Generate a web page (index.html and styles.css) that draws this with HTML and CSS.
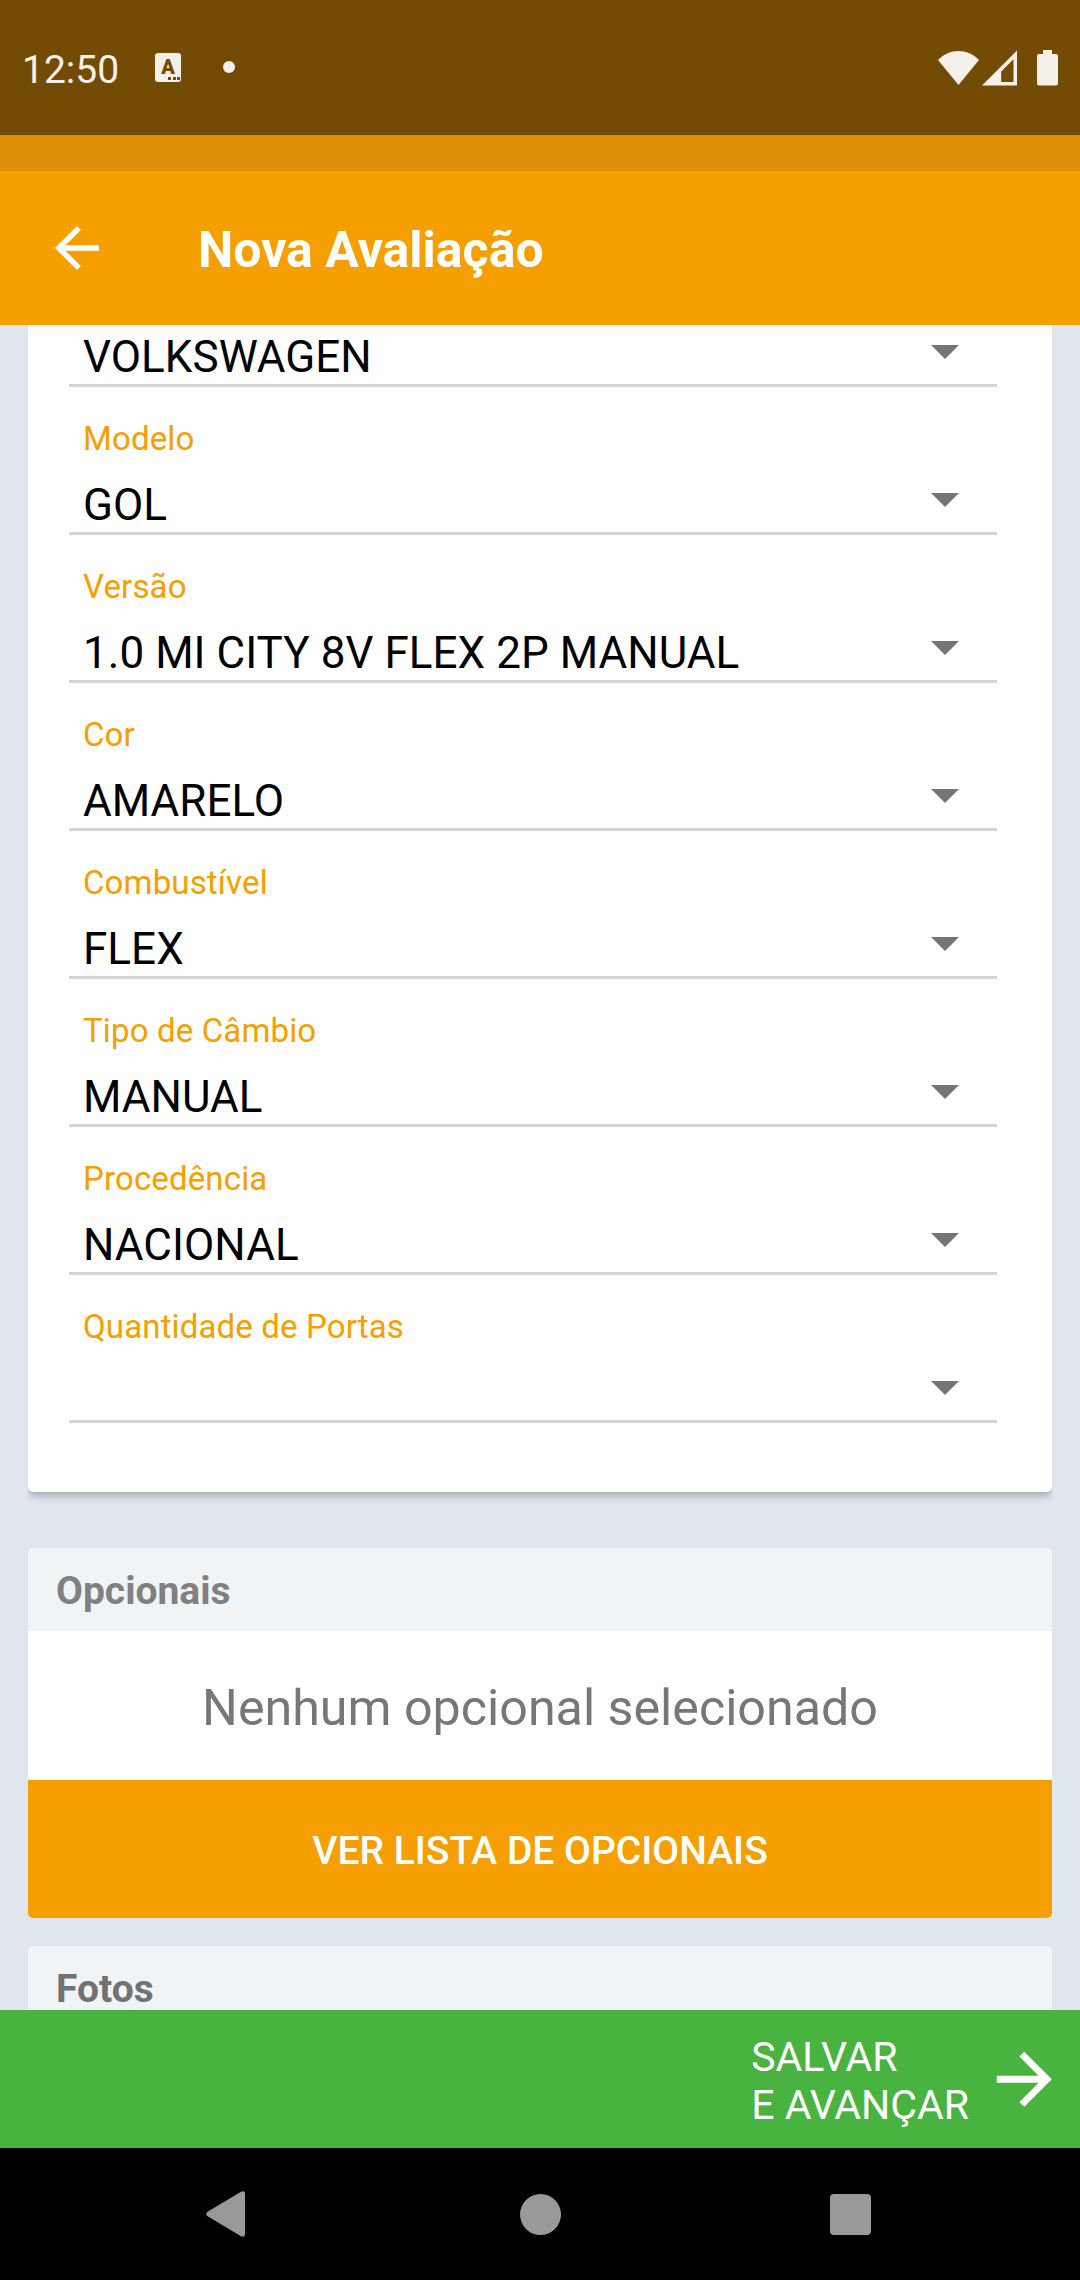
FILE: index.html
```html
<!DOCTYPE html>
<html lang="pt-BR">
<head>
<meta charset="utf-8">
<title>Nova Avaliação</title>
<link rel="stylesheet" href="styles.css">
</head>
<body>
<div class="screen">
  <div class="status">
    <span class="clock">12:50</span>
    <span class="keyboard"><span class="keyboard-letter">A</span><i></i><i></i><i></i></span>
    <span class="dot"></span>
    <svg class="signals" width="120" height="36" viewBox="0 0 120 36" fill="#f5f1ea">
      <path d="M0 10C11.500-2 29.500-2 41 10L20.500 35z"/>
      <path fill-rule="evenodd" d="M44 35.500L79 .5v35zM63.200 21.500v10.500h12.300V9.200z"/>
      <path d="M105 0h9v4h4q2 0 2 2v27.500q0 2-2 2h-17q-2 0-2-2V6q0-2 2-2h4z"/>
    </svg>
  </div>
  <div class="strip"></div>
  <header class="appbar">
    <svg width="66" height="66" viewBox="0 0 24 24" fill="#fff"><path d="M20 11H7.830l5.590-5.590L12 4l-8 8 8 8 1.410-1.410L7.830 13H20v-2z"/></svg>
    <h1>Nova Avaliação</h1>
  </header>
  <main class="content">
    <section class="card form">
      <div class="field first"><div class="value">VOLKSWAGEN<span class="caret"></span></div></div>
      <div class="field"><label>Modelo</label><div class="value">GOL<span class="caret"></span></div></div>
      <div class="field"><label>Versão</label><div class="value">1.0 MI CITY 8V FLEX 2P MANUAL<span class="caret"></span></div></div>
      <div class="field"><label>Cor</label><div class="value">AMARELO<span class="caret"></span></div></div>
      <div class="field"><label>Combustível</label><div class="value">FLEX<span class="caret"></span></div></div>
      <div class="field"><label>Tipo de Câmbio</label><div class="value">MANUAL<span class="caret"></span></div></div>
      <div class="field"><label>Procedência</label><div class="value">NACIONAL<span class="caret"></span></div></div>
      <div class="field"><label>Quantidade de Portas</label><div class="value"><span class="caret"></span></div></div>
    </section>
    <section class="card options">
      <h2>Opcionais</h2>
      <p class="empty">Nenhum opcional selecionado</p>
      <button class="list-button">VER LISTA DE OPCIONAIS</button>
    </section>
    <section class="card photos">
      <h2>Fotos</h2>
    </section>
  </main>
  <footer class="save">
    <span class="save-text">SALVAR<br>E AVANÇAR</span>
    <svg width="82.500" height="82.500" viewBox="0 0 24 24" fill="#fff"><path d="M12 4l-1.410 1.410L16.170 11H4v2h12.170l-5.580 5.590L12 20l8-8z"/></svg>
  </footer>
  <nav class="navbar">
    <svg width="40" height="46" viewBox="0 0 40 46" fill="#999"><path d="M1.200 21L35 .700Q39 -.800 39 3V43Q39 46.800 35 45.300L1.200 25Q-.700 23 1.200 21z"/></svg>
    <span class="home"></span>
    <span class="recent"></span>
  </nav>
</div>
</body>
</html>
```
FILE: styles.css
```css
* { box-sizing: border-box; margin: 0; }

body { font-family: Roboto, sans-serif; background: #000; }

.screen {
  width: 1080px;
  height: 2280px;
  display: flex;
  flex-direction: column;
  overflow: hidden;
}

.status {
  height: 135px;
  flex: none;
  background: #744b04;
  color: #f5f1ea;
  display: flex;
  align-items: center;
  padding: 0 22px;
}
.clock { font-size: 39px; line-height: 46px; padding-top: 4px; width: 133px; }
.keyboard {
  width: 26px;
  height: 29px;
  border-radius: 3px;
  background: #f5f1ea;
  display: flex;
  align-items: flex-end;
  justify-content: flex-end;
  gap: 1.500px;
  padding: 0 1px 2px 0;
  position: relative;
}
.keyboard-letter {
  position: absolute;
  left: 0;
  top: 3px;
  width: 26px;
  text-align: center;
  font-size: 20px;
  line-height: 22px;
  font-weight: 900;
  color: #744b04;
}
.keyboard i { width: 3px; height: 3px; background: #744b04; }
.dot { width: 12px; height: 12px; border-radius: 50%; background: #f5f1ea; margin: 0 0 1px 42px; }
.signals { margin-left: auto; }

.strip { height: 36px; flex: none; background: #de9008; }

.appbar {
  height: 154px;
  flex: none;
  background: #f5a000;
  display: flex;
  align-items: center;
  padding-left: 44px;
  gap: 88px;
}
.appbar h1 { font-size: 50px; line-height: 58px; font-weight: 700; color: #fff; padding-top: 4px; }

.content {
  height: 1685px;
  flex: none;
  overflow: hidden;
  background: #dfe6ed;
  padding: 0 28px;
}

.card { background: #fff; border-radius: 5px; }
.form {
  height: 1167px;
  padding: 0 55px 0 41px;
  border-radius: 0 0 5px 5px;
  box-shadow: 0 3px 8px rgba(60, 75, 70, .42);
  clip-path: inset(0 0 -12px 0);
}
.field {
  height: 148px;
  padding: 32px 0 1px 14px;
  border-bottom: 3px solid #d5d5d5;
  display: flex;
  flex-direction: column;
  gap: 21px;
}
.field.first { height: 62px; padding-top: 6px; }
.field label { font-size: 33px; line-height: 39px; letter-spacing: .14px; color: #f5a000; }
.value {
  height: 52px;
  font-size: 44px;
  line-height: 52px;
  letter-spacing: .04px;
  color: #000;
  white-space: nowrap;
  display: flex;
  align-items: flex-start;
}
.caret {
  margin: 14px 38px 0 auto;
  width: 28px;
  height: 14px;
  background: #757575;
  clip-path: polygon(0 0, 100% 0, 50% 100%);
}

.options { margin-top: 56px; height: 370px; overflow: hidden; }
.card h2 {
  height: 83px;
  padding: 21px 28px 0;
  font-size: 39px;
  line-height: 45px;
  font-weight: 700;
  background: #f0f4f7;
  color: #808080;
}
.empty {
  height: 149px;
  line-height: 149px;
  padding-top: 2px;
  font-size: 50.200px;
  text-align: center;
  color: #777;
}
.list-button {
  display: block;
  width: 100%;
  height: 138px;
  border: 0;
  padding: 4px 0 0;
  background: #f5a000;
  color: #fff;
  font: 500 39px/45px Roboto, sans-serif;
}
.photos { margin-top: 28px; height: 90px; overflow: hidden; }
.photos h2 { color: #707274; }

.save {
  height: 138px;
  flex: none;
  background: #48b43f;
  color: #fff;
  display: flex;
  align-items: center;
  justify-content: flex-end;
  padding-right: 14.500px;
  gap: 14px;
}
.save-text { font-size: 41px; line-height: 48px; padding-top: 3px; }

.navbar {
  height: 132px;
  flex: none;
  background: #000;
  display: flex;
  align-items: center;
  padding-left: 206px;
}
.home { width: 41px; height: 41px; border-radius: 50%; background: #999; margin-left: 273.500px; }
.recent { width: 41px; height: 41px; border-radius: 4px; background: #999; margin-left: 269.500px; }
```
